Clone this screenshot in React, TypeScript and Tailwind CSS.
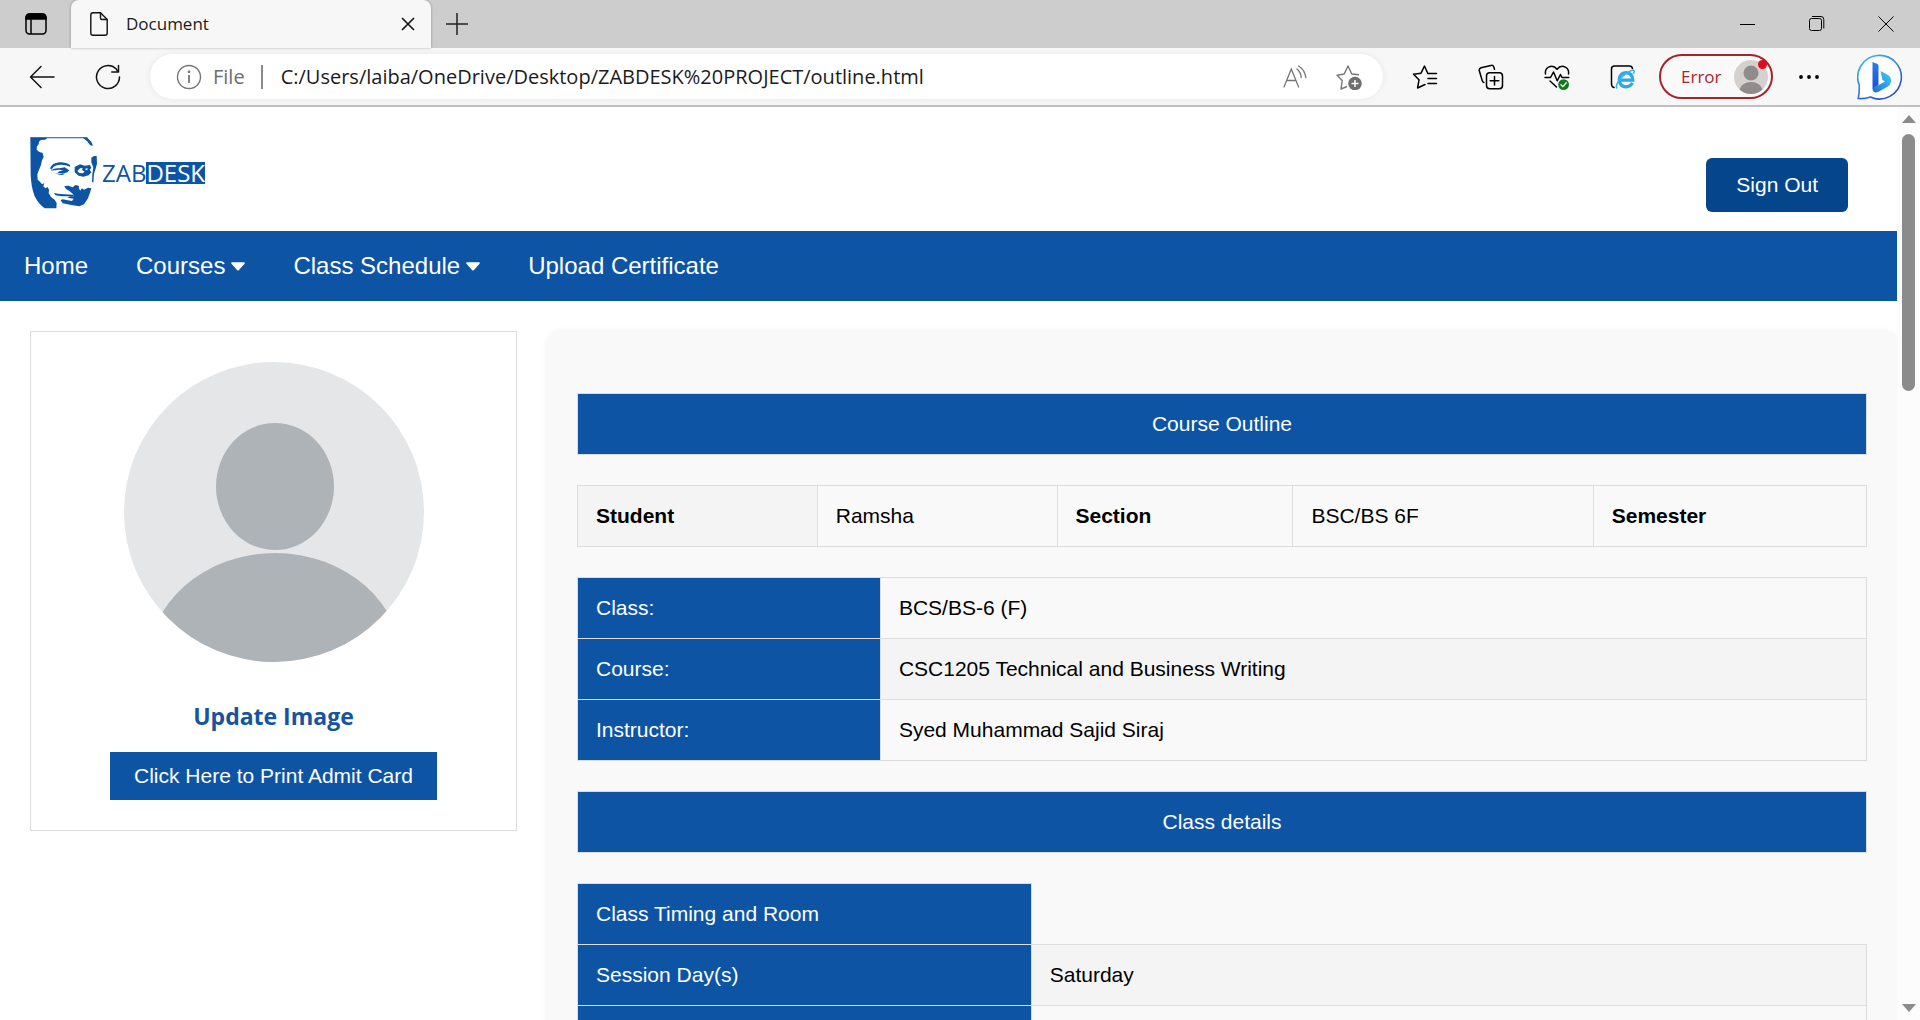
import React from 'react';

const chromeFont = "font-['Open_Sans','Noto_Sans',sans-serif]";

function Face() {
  return (
    <svg viewBox="0 0 204 216" className="h-[72px] w-[68px]" fill="#0d54a5" aria-hidden="true">
      <path d="M1 2 H52 L46 8 L32 9 L27 14 L26 22 L21 28 L20 38 L27 44 L38 48 L41 60 L36 70 L33 84 L28 96 L22 112 L23 128 L30 134 L36 142 L43 138 L40 148 L46 154 L53 150 L57 158 L56 168 L63 180 L74 188 L80 198 L79 214 H44 Q26 202 14 178 Q3 150 2 112 Z" />
      <path d="M1 1 H172 V4 H1 Z" />
      <path d="M158 2 L172 2 L184 14 L189 27 L180 24 Q172 10 158 2 Z" />
      <path d="M184 62 L192 57 L200 57 L201 80 L196 98 L192 110 L190 137 L186 134 L187 112 L190 92 L184 76 Z" />
      <path d="M60 94 Q66 78 88 76 Q108 75 120 84 L121 89 Q98 80 80 85 Q70 88 64 98 Z" />
      <path d="M62 101 Q74 92 88 94 L104 91 L118 100 L112 106 L98 110 L82 107 L88 103 L100 101 L88 98 Z" />
      <path d="M76 109 Q90 112 106 110 L96 114 Q84 114 76 109 Z" />
      <path d="M134 90 L150 82 L164 86 L180 84 L184 92 L179 98 L184 106 L176 115 L160 119 L146 116 L134 106 Z" />
      <path fill="#fff" d="M142 102 L150 94 L158 93 L156 99 L164 104 L158 109 L148 108 Z" />
      <path fill="#fff" d="M166 95 L173 94 L172 99 L167 100 Z" />
      <path d="M103 147 L116 146 L128 151 L136 144 L146 146 L150 158 L156 154 L162 158 L174 152 L184 154 L179 170 L174 184 L162 202 L148 208 L124 204 L98 199 L92 190 L97 187 L126 192 L131 185 L112 182 L122 178 L132 178 L128 170 L118 162 L108 156 Z" />
      <path d="M72 168 L84 170 L102 172 L130 173 L131 179 L112 178 L96 178 L76 175 Z" />
      <path fill="#fff" d="M146 152 L151 161 L156 152 L152 148 Z" />
    </svg>
  );
}

function IconButton({ label, children }: { label: string; children: React.ReactNode }) {
  return (
    <button type="button" aria-label={label} className="flex h-12 w-[66px] shrink-0 items-center justify-center">
      {children}
    </button>
  );
}

function TabBar() {
  return (
    <div className="flex h-12 items-end bg-[#cdcdcd]">
      <button type="button" aria-label="Tab actions menu" className="flex h-12 w-[71px] items-center justify-center">
        <svg width="22" height="22" viewBox="0 0 22 22" fill="none" stroke="#000" strokeWidth="1.5">
          <rect x="1" y="1" width="20" height="20" rx="3.5" />
          <path d="M1 5 Q1 1 5 1 H17 Q21 1 21 5 V6 H1 Z" fill="#000" />
          <path d="M6 6 V21" />
        </svg>
      </button>
      <div className="flex h-12 w-[360px] items-center rounded-t-lg bg-[#f7f7f7] pr-[5px] pl-[19px] shadow-[0_0_3px_rgba(0,0,0,0.3)]">
        <svg width="18" height="24" viewBox="0 0 18 24" fill="none" stroke="#111" strokeWidth="1.4" strokeLinejoin="round">
          <path d="M3 .8 H10.5 L17.2 7.5 V21 Q17.2 23.2 15 23.2 H3 Q.8 23.2 .8 21 V3 Q.8 .8 3 .8 Z" />
          <path d="M10.5 .8 V6 Q10.5 7.5 12 7.5 H17.2" />
        </svg>
        <span className="ml-[18px] grow text-[17px] text-[#1b1b1b]">Document</span>
        <button type="button" aria-label="Close tab" className="flex size-9 items-center justify-center">
          <svg width="14" height="14" viewBox="0 0 14 14" stroke="#111" strokeWidth="1.6">
            <path d="M1 1 L13 13 M13 1 L1 13" />
          </svg>
        </button>
      </div>
      <button type="button" aria-label="New tab" className="flex h-12 w-[52px] items-center justify-center">
        <svg width="22" height="22" viewBox="0 0 22 22" stroke="#222" strokeWidth="1.5">
          <path d="M11 0 V22 M0 11 H22" />
        </svg>
      </button>
      <div className="ml-auto flex h-12 items-center">
        <button type="button" aria-label="Minimize" className="flex h-12 w-[69px] items-center justify-center">
          <svg width="15" height="15" viewBox="0 0 15 15" stroke="#000" strokeWidth="1">
            <path d="M0 7.5 H15" />
          </svg>
        </button>
        <button type="button" aria-label="Restore" className="flex h-12 w-[69px] items-center justify-center">
          <svg width="16" height="16" viewBox="0 0 16 16" fill="none" stroke="#000" strokeWidth="1">
            <rect x=".5" y="2.5" width="12" height="12" rx="2" />
            <path d="M3 .5 H12 Q14.8 .5 14.8 3.5 V12.5" />
          </svg>
        </button>
        <button type="button" aria-label="Close window" className="flex h-12 w-[69px] items-center justify-center">
          <svg width="16" height="16" viewBox="0 0 16 16" stroke="#000" strokeWidth="1">
            <path d="M.5 .5 L15.5 15.5 M15.5 .5 L.5 15.5" />
          </svg>
        </button>
      </div>
    </div>
  );
}

function Toolbar() {
  return (
    <div className="flex h-[59px] items-center border-b-2 border-[#c0c0c0] bg-[#f7f7f7] pr-[7px] pl-[9px]">
      <IconButton label="Back">
        <svg width="26" height="24" viewBox="0 0 26 24" fill="none" stroke="#111" strokeWidth="1.5" strokeLinecap="round" strokeLinejoin="round">
          <path d="M12 1.5 L1.5 12 L12 22.5 M1.5 12 H25" />
        </svg>
      </IconButton>
      <IconButton label="Refresh">
        <svg width="26" height="26" viewBox="0 0 26 26" fill="none" stroke="#111" strokeWidth="1.5" strokeLinecap="round" strokeLinejoin="round">
          <path d="M24.5 13 A11.5 11.5 0 1 1 21 4.8 L23 7.5" />
          <path d="M23.5 1.5 V8 H16.8" />
        </svg>
      </IconButton>
      <div className="mx-[9px] flex h-[45px] grow items-center rounded-full bg-white shadow-[0_0_6px_rgba(0,0,0,0.07)]">
        <svg className="ml-[26px]" width="26" height="26" viewBox="0 0 26 26" fill="none" stroke="#767676" strokeWidth="1.4">
          <circle cx="13" cy="13" r="11.5" />
          <path d="M13 11 V19" strokeWidth="1.8" />
          <circle cx="13" cy="7.8" r=".7" fill="#767676" />
        </svg>
        <span className="ml-[11px] text-xl text-[#6e6e6e]">File</span>
        <span className="ml-4 h-6 w-0.5 bg-[#8a8a8a]" />
        <input
          type="text"
          aria-label="Address"
          defaultValue="C:/Users/laiba/OneDrive/Desktop/ZABDESK%20PROJECT/outline.html"
          className="ml-[18px] min-w-0 grow bg-transparent text-xl text-[#1b1b1b] outline-none"
        />
        <button type="button" aria-label="Read aloud" className="flex h-10 w-[54px] items-center justify-center">
          <svg width="24" height="24" viewBox="0 0 24 24" fill="none" stroke="#767676" strokeWidth="1.3" strokeLinecap="round">
            <path d="M1 22 L8.3 4 L15.6 22 M3.6 15.5 H13" />
            <path d="M14 4 Q18 7.5 18.2 12.5 M15.5 1 Q22 5 22.8 12.5" />
          </svg>
        </button>
        <button type="button" aria-label="Add to favorites" className="mr-[7px] flex h-10 w-[54px] items-center justify-center">
          <svg width="27" height="26" viewBox="0 0 27 26" fill="none" stroke="#767676" strokeWidth="1.4" strokeLinejoin="round">
            <path d="M11 22.5 L5 25 L6.2 16.5 L1 11.2 L8.2 10 L12 2 L15.8 10 L23 10.8" />
            <circle cx="19" cy="19.5" r="6.8" fill="#6e6e6e" stroke="none" />
            <path d="M15.5 19.5 H22.5 M19 16 V23" stroke="#fff" strokeWidth="1.5" />
          </svg>
        </button>
      </div>
      <IconButton label="Favorites">
        <svg width="26" height="26" viewBox="0 0 26 26" fill="none" stroke="#000" strokeWidth="1.5" strokeLinecap="round" strokeLinejoin="round">
          <path d="M15.8 9.5 L12.5 2 L9 9.2 L1.5 10.3 L7 15.8 L5.6 24 L13 20.5" />
          <path d="M15.8 9.5 H24.5 M16 14.5 H24.5 M16 19.5 H24.5" />
        </svg>
      </IconButton>
      <IconButton label="Collections">
        <svg width="26" height="26" viewBox="0 0 26 26" fill="none" stroke="#000" strokeWidth="1.5" strokeLinecap="round" strokeLinejoin="round">
          <path d="M5.8 18.5 Q4.6 18 4.2 16.5 L1.3 6.8 Q.8 4.6 3 3.8 L13 1.4 Q15.2 1 15.8 3 L16.5 5.2" />
          <rect x="8.5" y="8.7" width="16" height="16" rx="3.2" />
          <path d="M16.5 12.5 V21 M12.2 16.7 H20.8" />
        </svg>
      </IconButton>
      <IconButton label="Browser essentials">
        <svg width="26" height="26" viewBox="0 0 26 26" fill="none" stroke="#000" strokeWidth="1.5" strokeLinecap="round" strokeLinejoin="round">
          <path d="M1.5 10 C.5 3 8.5 -.5 13 5.3 C17.5 -.5 25.5 3 24.5 10" />
          <path d="M1 13.5 H6.5 L9.5 8 L13.2 16.8 L16.5 10.5 L18 13.5 H24.8" />
          <path d="M6 17 L12.5 23" />
          <circle cx="19.6" cy="20.6" r="5.4" fill="#0f7b1b" stroke="none" />
          <path d="M17 20.8 L18.9 22.6 L22.3 18.8" stroke="#fff" strokeWidth="1.3" />
        </svg>
      </IconButton>
      <IconButton label="Internet Explorer mode">
        <svg width="26" height="26" viewBox="0 0 26 26" fill="none">
          <path d="M4 23.5 Q1.5 23 1.5 20 V5 Q1.5 2 4.5 2 H19.5 Q22 2 22.5 4.5" stroke="#000" strokeWidth="1.5" strokeLinecap="round" />
          <path d="M22.5 19 Q20 23 15.5 22.8 Q9.8 22.3 9.2 15.8 Q9.6 9 16 8.6 Q22.6 9 22.8 16.2 H9.5" stroke="#2aa9e8" strokeWidth="3.2" />
          <path d="M7 24.5 Q4.5 21 11.5 13.5 Q18.5 6.5 23.5 6 Q25 7 23.3 10" stroke="#38b6f0" strokeWidth="1.5" />
        </svg>
      </IconButton>
      <button
        type="button"
        className="relative mr-[3px] ml-[3px] flex h-[45px] w-[114px] shrink-0 items-center justify-between rounded-full border-2 border-[#a4262c] bg-[#faf9f9] pr-[3px] pl-5 text-[17px] text-[#a4262c]"
      >
        Error
        <svg width="34" height="34" viewBox="0 0 34 34" aria-hidden="true">
          <circle cx="17" cy="17" r="17" fill="#d4d1cf" />
          <circle cx="17" cy="13" r="7.5" fill="#8f8c8a" />
          <path d="M5.5 29.5 Q8 22 17 22 Q26 22 28.5 29.5 Q23.5 34 17 34 Q10.5 34 5.5 29.5 Z" fill="#8f8c8a" />
        </svg>
        <span className="absolute top-1 right-1 size-[9px] rounded-full bg-[#e00b1c]" />
      </button>
      <IconButton label="Settings and more">
        <svg width="20" height="4" viewBox="0 0 20 4" fill="#000">
          <circle cx="2" cy="2" r="1.9" />
          <circle cx="10" cy="2" r="1.9" />
          <circle cx="18" cy="2" r="1.9" />
        </svg>
      </IconButton>
      <div className="ml-[5px]">
        <IconButton label="Bing">
          <svg width="46" height="46" viewBox="0 0 46 46" fill="none">
            <defs>
              <linearGradient id="bubble" x1="0" y1="0" x2="0.6" y2="1">
                <stop offset="0" stopColor="#35c3e8" />
                <stop offset="1" stopColor="#2a4fd0" />
              </linearGradient>
              <linearGradient id="stem" x1="0" y1="0" x2="0" y2="1">
                <stop offset="0" stopColor="#2b7de9" />
                <stop offset="1" stopColor="#1b4fd6" />
              </linearGradient>
              <linearGradient id="sweep" x1="0" y1="1" x2="1" y2="0">
                <stop offset="0" stopColor="#1f6be0" />
                <stop offset="1" stopColor="#3fd0ee" />
              </linearGradient>
            </defs>
            <path d="M1.2 44.5 Q2.5 40 2.2 31 A21.8 21.8 0 1 1 13.5 43 Q8 45 1.2 44.5 Z" fill="#fff" stroke="url(#bubble)" strokeWidth="1.6" />
            <path d="M15.5 8 L20.5 10 Q21.5 10.5 21.5 12 V31 L15.5 35 Z" fill="url(#stem)" />
            <path d="M23.5 17 L31 21 Q34.5 23 34 27.5 Q33.5 31 30 33 L21 38 Q18 39 16.5 37.5 Q15.5 36.5 15.5 34.5 L28 27.5 L25.5 26 Z" fill="url(#sweep)" />
          </svg>
        </IconButton>
      </div>
    </div>
  );
}

function Caret() {
  return (
    <svg width="14" height="9" viewBox="0 0 15 9" fill="#fff" aria-hidden="true">
      <path d="M1 0 H14 Q15.3 .5 14.5 1.6 L8.3 8.4 Q7.5 9 6.7 8.4 L.5 1.6 Q-.3 .5 1 0 Z" />
    </svg>
  );
}

const navLinks = [
  { label: 'Home', menu: false },
  { label: 'Courses', menu: true },
  { label: 'Class Schedule', menu: true },
  { label: 'Upload Certificate', menu: false },
];

const tableClass = 'w-full table-fixed border-collapse text-[21px] leading-6';
const cell = 'h-[61px] border border-[#dddddd] px-[18px] text-left font-normal';
const headCell = 'h-[61px] border border-[#dddddd] px-[18px] text-left font-bold';
const blueCell = 'h-[61px] border border-[#dddddd] bg-[#0d54a5] px-[18px] text-left font-normal text-white';

function Banner({ children }: { children: React.ReactNode }) {
  return (
    <table className={tableClass}>
      <tbody>
        <tr>
          <th className="h-[61px] border border-[#dddddd] bg-[#0d54a5] text-center font-normal text-white">{children}</th>
        </tr>
      </tbody>
    </table>
  );
}

function DetailRow({ label, value, shaded }: { label: string; value: string; shaded?: boolean }) {
  return (
    <tr className={shaded ? 'bg-[#f4f4f4]' : ''}>
      <th scope="row" className={blueCell}>{label}</th>
      <td className={cell}>{value}</td>
    </tr>
  );
}

function Sidebar() {
  return (
    <aside className="flex flex-col items-center self-start border border-[#dddddd] px-5 py-[30px]">
      <svg width="300" height="300" viewBox="0 0 300 300" role="img" aria-label="Profile picture">
        <clipPath id="portrait">
          <circle cx="150" cy="150" r="150" />
        </clipPath>
        <g clipPath="url(#portrait)">
          <rect width="300" height="300" fill="#e4e6e7" />
          <ellipse cx="151" cy="124.5" rx="59" ry="63.5" fill="#aeb3b7" />
          <ellipse cx="151" cy="304" rx="128" ry="113" fill="#aeb3b7" />
        </g>
      </svg>
      <h2 className={`mt-9 text-[23px] leading-9 font-bold text-[#1653a0] ${chromeFont}`}>Update Image</h2>
      <button type="button" className="mt-[18px] h-12 bg-[#0d54a5] px-6 text-[21px] text-white">
        Click Here to Print Admit Card
      </button>
    </aside>
  );
}

function Page() {
  return (
    <div className="min-w-0 grow overflow-hidden bg-white font-['Liberation_Sans',Arial,sans-serif] text-black">
      <header className="flex h-[124px] items-center justify-between pr-[49px] pl-[30px]">
        <a href="#home" aria-label="ZABDESK" className="mt-2 flex items-center">
          <Face />
          <span className={`ml-1 flex text-2xl leading-[22px] text-[#0d54a5] ${chromeFont}`}>
            ZAB<span className="bg-[#0d54a5] text-white">DESK</span>
          </span>
        </a>
        <button type="button" className="mt-8 h-[54px] rounded-md bg-[#05458b] px-[30px] text-[21px] text-white">
          Sign Out
        </button>
      </header>
      <nav className="flex h-[70px] items-center gap-12 bg-[#0d54a5] px-6 text-2xl text-white">
        {navLinks.map((link) => (
          <a key={link.label} href="#nav" className="flex items-center gap-1.5">
            {link.label}
            {link.menu && <Caret />}
          </a>
        ))}
      </nav>
      <div className="mt-[30px] grid grid-cols-[487px_1fr] gap-[30px] pl-[30px]">
        <Sidebar />
        <main className="flex flex-col gap-[30px] rounded-[12px] bg-[#f9f9f9] px-[30px] pt-[62px] pb-[30px] shadow-[0_0_6px_rgba(0,0,0,0.05)]">
          <Banner>Course Outline</Banner>
          <table className={tableClass}>
            <colgroup>
              <col className="w-[18.6%]" />
              <col className="w-[18.6%]" />
              <col className="w-[18.3%]" />
              <col className="w-[23.3%]" />
              <col />
            </colgroup>
            <tbody>
              <tr>
                <th className={`${headCell} bg-[#f4f4f4]`}>Student</th>
                <td className={cell}>Ramsha</td>
                <th className={headCell}>Section</th>
                <td className={cell}>BSC/BS 6F</td>
                <th className={headCell}>Semester</th>
              </tr>
            </tbody>
          </table>
          <table className={tableClass}>
            <colgroup>
              <col className="w-[23.5%]" />
              <col />
            </colgroup>
            <tbody>
              <DetailRow label="Class:" value="BCS/BS-6 (F)" />
              <DetailRow label="Course:" value="CSC1205 Technical and Business Writing" shaded />
              <DetailRow label="Instructor:" value="Syed Muhammad Sajid Siraj" />
            </tbody>
          </table>
          <Banner>Class details</Banner>
          <table className={tableClass}>
            <colgroup>
              <col className="w-[35.2%]" />
              <col />
            </colgroup>
            <tbody>
              <tr>
                <th scope="row" className={blueCell}>Class Timing and Room</th>
              </tr>
              <DetailRow label="Session Day(s)" value="Saturday" shaded />
              <DetailRow label="" value="" />
            </tbody>
          </table>
        </main>
      </div>
    </div>
  );
}

function ScrollBar() {
  return (
    <div className="flex w-[23px] shrink-0 flex-col items-center bg-[#fcfcfc] py-2" aria-hidden="true">
      <svg width="14" height="8" viewBox="0 0 14 8" fill="#8b8b8b">
        <path d="M7 0 L14 8 H0 Z" />
      </svg>
      <div className="mt-[11px] h-[257px] w-[13px] rounded-full bg-[#8b8b8b]" />
      <svg className="mt-auto" width="14" height="8" viewBox="0 0 14 8" fill="#8b8b8b">
        <path d="M7 8 L14 0 H0 Z" />
      </svg>
    </div>
  );
}

export default function App() {
  return (
    <div className="flex h-screen flex-col overflow-hidden bg-white">
      <div className={`shrink-0 ${chromeFont}`}>
        <TabBar />
        <Toolbar />
      </div>
      <div className="flex min-h-0 grow">
        <Page />
        <ScrollBar />
      </div>
    </div>
  );
}
